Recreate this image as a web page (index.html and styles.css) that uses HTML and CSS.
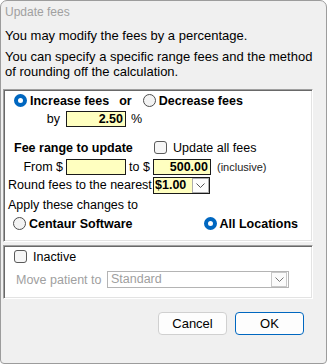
FILE: index.html
```html
<!DOCTYPE html>
<html>
<head>
    <title>Update fees</title>
    <meta charset="UTF-8">
    <link rel="stylesheet" href="styles.css">
</head>
<body>
    <div class="dialog">
        <div class="title">Update fees</div>
        <p class="intro first">You may modify the fees by a percentage.</p>
        <p class="intro">You can specify a specific range fees and the method<br>of rounding off the calculation.</p>

        <div class="group group-main">
            <div class="row row-mode">
                <span class="radio checked"></span>
                <span class="bold opt">Increase fees</span>
                <span class="bold or">or</span>
                <span class="radio radio-dec"></span>
                <span class="bold opt">Decrease fees</span>
            </div>
            <div class="row row-by">
                <span class="lbl-right">by</span>
                <span class="field num">2.50</span>
                <span class="pct">%</span>
            </div>
            <div class="row row-range">
                <span class="bold range-title">Fee range to update</span>
                <span class="check"></span>
                <span class="check-text">Update all fees</span>
            </div>
            <div class="row row-from">
                <span class="lbl-right lbl-from">From $</span>
                <span class="field num"></span>
                <span class="to">to $</span>
                <span class="field num field-to">500.00</span>
                <span class="small">(inclusive)</span>
            </div>
            <div class="row row-round">
                <span class="round-lbl">Round fees to the nearest</span>
                <span class="combo">
                    <span class="combo-value">$1.00</span>
                    <span class="combo-btn">
                        <svg width="9" height="5" viewBox="0 0 9 5"><polyline points="0.5,0.5 4.5,4.5 8.5,0.5" fill="none" stroke="#555" stroke-width="1"/></svg>
                    </span>
                </span>
            </div>
            <div class="row row-apply">
                <span class="apply-lbl">Apply these changes to</span>
            </div>
            <div class="row row-target">
                <span class="target">
                    <span class="radio"></span>
                    <span class="bold opt">Centaur Software</span>
                </span>
                <span class="target">
                    <span class="radio checked"></span>
                    <span class="bold opt">All Locations</span>
                </span>
            </div>
        </div>

        <div class="group group-inactive">
            <div class="row row-inactive">
                <span class="check"></span>
                <span class="check-text">Inactive</span>
            </div>
            <div class="row row-move">
                <span class="move-lbl">Move patient to</span>
                <span class="select">
                    <span class="select-value">Standard</span>
                    <span class="select-btn">
                        <svg width="9" height="5" viewBox="0 0 9 5"><polyline points="0.5,0.5 4.5,4.5 8.5,0.5" fill="none" stroke="#777" stroke-width="1"/></svg>
                    </span>
                </span>
            </div>
        </div>

        <div class="buttons">
            <button class="btn">Cancel</button>
            <button class="btn btn-default">OK</button>
        </div>
    </div>
</body>
</html>
```

FILE: styles.css
```css
body {
    margin: 0;
    background: #fff;
    color: #000;
    font-family: "Liberation Sans", Arial, sans-serif;
    font-size: 12.5px;
}
.dialog {
    width: 327px;
    height: 364px;
    box-sizing: border-box;
    border: 1px solid #9c9c9c;
    border-radius: 7px 7px 4px 4px;
    background: #f0f0f0;
    overflow: hidden;
}
.title {
    height: 23px;
    line-height: 23px;
    padding-left: 4px;
    font-size: 12px;
    color: #a0a0a0;
}
.intro {
    margin: 6px 0 0;
    padding-left: 4px;
    line-height: 15px;
    white-space: nowrap;
    font-size: 13px;
}
.intro.first {
    margin-top: 4px;
}
.group {
    box-sizing: border-box;
    width: 310px;
    margin-left: 2px;
    background: #fff;
    border: 1px solid;
    border-color: #a0a0a0 #fff #fff #a0a0a0;
    box-shadow: inset 1px 1px 0 #696969, inset -1px -1px 0 #e3e3e3;
    padding: 1px 2px;
    white-space: nowrap;
}
.group-main {
    margin-top: 10px;
    height: 153px;
}
.group-inactive {
    margin-top: 3px;
    height: 54px;
}
.row {
    display: flex;
    align-items: center;
}
.row > span {
    flex: none;
}
.bold {
    font-weight: 700;
}

/* radios and checks */
.radio {
    box-sizing: border-box;
    width: 13px;
    height: 13px;
    border-radius: 50%;
    border: 1px solid #4d4d4d;
    background: #f3f3f3;
    flex: none;
}
.radio.checked {
    border: 4px solid #0067c0;
    background: #fff;
}
.check {
    box-sizing: border-box;
    width: 13px;
    height: 13px;
    border-radius: 3px;
    border: 1px solid #5a5a5a;
    background: #f6f6f6;
    flex: none;
}
.opt {
    margin-left: 3px;
}
.check-text {
    margin-left: 6px;
}

/* fields */
.field {
    box-sizing: border-box;
    height: 16px;
    width: 60px;
    border: 1px solid #1a1a1a;
    background: #ffffc0;
    line-height: 14px;
    padding: 0 2px;
    font-weight: 700;
}
.num {
    text-align: right;
}

/* row 1 */
.row-mode {
    height: 15px;
    margin-top: 2px;
}
.row-mode .radio:first-child {
    margin-left: 8px;
}
.or {
    margin-left: 10px;
}
.radio-dec {
    margin-left: 11px;
}

/* row 2 */
.row-by {
    height: 16px;
    margin-top: 3px;
}
.lbl-right {
    box-sizing: border-box;
    width: 60px;
    text-align: right;
    padding-right: 6px;
}
.pct {
    margin-left: 5px;
}

/* row 3 */
.row-range {
    height: 15px;
    margin-top: 13px;
}
.range-title {
    box-sizing: border-box;
    width: 148px;
    padding-left: 8px;
}

/* row 4 */
.row-from {
    height: 16px;
    margin-top: 4px;
}
.lbl-from {
    padding-right: 3px;
}
.to {
    box-sizing: border-box;
    width: 27px;
    padding-left: 3px;
}
.field-to {
    width: 58px;
}
.small {
    font-size: 11px;
    margin-left: 6px;
    color: #222;
}

/* row 5 */
.row-round {
    height: 16px;
    margin-top: 2px;
}
.round-lbl {
    box-sizing: border-box;
    width: 147px;
    padding-left: 2px;
}
.combo {
    display: flex;
    box-sizing: border-box;
    width: 57px;
    height: 17px;
    border: 1px solid #1a1a1a;
    background: #ffffc0;
}
.combo-value {
    flex: 1;
    font-weight: 700;
    line-height: 15px;
    padding-left: 1px;
}
.combo-btn {
    box-sizing: border-box;
    width: 17px;
    border: 1px solid #adadad;
    background: #fdfdfd;
    display: flex;
    align-items: center;
    justify-content: center;
}

/* rows 6 and 7 */
.row-apply {
    height: 15px;
    margin-top: 4px;
}
.apply-lbl {
    padding-left: 2px;
}
.row-target {
    height: 15px;
    margin-top: 4px;
    justify-content: space-between;
    padding: 0 12px 0 7px;
}
.target {
    display: flex;
    align-items: center;
}

/* inactive box */
.row-inactive {
    height: 13px;
    margin-top: 3px;
}
.row-inactive .check {
    margin-left: 8px;
}
.row-move {
    height: 17px;
    margin-top: 8px;
}
.move-lbl {
    box-sizing: border-box;
    width: 101px;
    padding-left: 10px;
    color: #a0a0a0;
}
.select {
    display: flex;
    box-sizing: border-box;
    width: 182px;
    height: 17px;
    border: 1px solid #b4b4b4;
    background: #fff;
}
.select-value {
    flex: 1;
    color: #a0a0a0;
    line-height: 15px;
    padding-left: 3px;
}
.select-btn {
    box-sizing: border-box;
    width: 16px;
    border: 1px solid #c8c8c8;
    margin-right: 1px;
    background: #fbfbfb;
    display: flex;
    align-items: center;
    justify-content: center;
}

/* buttons */
.buttons {
    display: flex;
    justify-content: flex-end;
    gap: 8px;
    margin-top: 13px;
    padding-right: 22px;
}
.btn {
    box-sizing: border-box;
    width: 69px;
    height: 23px;
    border: 1px solid #d0d0d0;
    border-radius: 4px;
    background: #fdfdfd;
    font-family: "Liberation Sans", Arial, sans-serif;
    font-size: 13px;
    color: #000;
    padding: 0;
}
.btn-default {
    border-color: #0067c0;
}
```
